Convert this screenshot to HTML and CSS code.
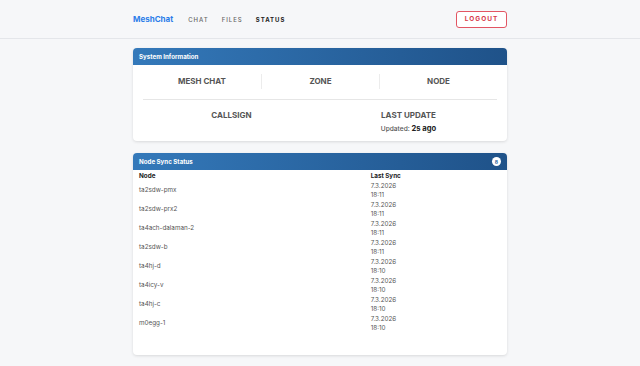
FILE: index.html
```html
<!DOCTYPE html>
<html lang="en">
<head>
  <meta charset="UTF-8">
  <title>MeshChat - Status</title>
  <link rel="stylesheet" href="styles.css">
</head>
<body>

<!-- Top navigation -->
<header class="topbar">
  <div class="topbar-inner">
    <a class="brand" href="#">MeshChat</a>
    <nav class="nav">
      <a href="#">CHAT</a>
      <a href="#">FILES</a>
      <a href="#" class="active">STATUS</a>
    </nav>
    <button class="btn-logout">LOGOUT</button>
  </div>
</header>

<main class="container">

  <!-- System info -->
  <section class="card">
    <div class="card-header">System Information</div>
    <div class="card-body info-body">
      <div class="info-row three">
        <div class="info-cell">MESH CHAT</div>
        <div class="info-cell">ZONE</div>
        <div class="info-cell">NODE</div>
      </div>
      <div class="info-row two">
        <div class="info-cell">CALLSIGN</div>
        <div class="info-cell">
          LAST UPDATE
          <div class="updated">Updated: <b>2s ago</b></div>
        </div>
      </div>
    </div>
  </section>

  <!-- Node sync -->
  <section class="card sync-card">
    <div class="card-header">
      <span>Node Sync Status</span>
      <span class="badge">8</span>
    </div>
    <div class="card-body sync-body">
      <table class="sync-table">
        <thead>
          <tr><th>Node</th><th class="col-sync">Last Sync</th></tr>
        </thead>
        <tbody id="sync-rows"></tbody>
      </table>
    </div>
  </section>

</main>

<script>
const nodes = [
  ['ta2sdw-pmx', '18:11'],
  ['ta2sdw-prx2', '18:11'],
  ['ta4ach-dalaman-2', '18:11'],
  ['ta2sdw-b', '18:11'],
  ['ta4hj-d', '18:10'],
  ['ta4icy-v', '18:10'],
  ['ta4hj-c', '18:10'],
  ['m0egg-1', '18:10']
];

let rows = '';
nodes.forEach(n => {
  rows += `<tr><td>${n[0]}</td><td>7.3.2026<br>${n[1]}</td></tr>`;
});
document.getElementById('sync-rows').innerHTML = rows;
</script>

</body>
</html>
```

FILE: styles.css
```css
body {
  font-family: Inter, 'Noto Sans', sans-serif;
  background: #f6f7f9;
  margin: 0;
  color: #333;
}
a { text-decoration: none; }

.topbar {
  height: 38px;
  border-bottom: 1px solid #e4e6ea;
  background: #f6f7f9;
}
.topbar-inner {
  width: 374px;
  margin: 0 auto;
  height: 38px;
  display: flex;
  align-items: center;
}
.brand {
  color: #2b7de9;
  font-weight: 700;
  font-size: 8px;
  margin-right: 15px;
}
.nav { display: flex; gap: 13px; flex: 1; }
.nav a {
  font-size: 6px;
  letter-spacing: 1px;
  color: #666;
  font-weight: 500;
}
.nav a.active { color: #222; font-weight: 700; }
.btn-logout {
  width: 51px;
  height: 17px;
  border: 1px solid #e25563;
  border-radius: 3px;
  background: #fff;
  color: #d83a4b;
  font-family: inherit;
  font-size: 6.5px;
  font-weight: 700;
  letter-spacing: 1px;
  padding: 0;
}

.container {
  width: 374px;
  margin: 9px auto 0;
}
.card {
  background: #fff;
  border-radius: 4px;
  box-shadow: 0 1px 3px rgba(0,0,0,0.12);
  overflow: hidden;
  margin-bottom: 12px;
}
.card-header {
  height: 17px;
  background: linear-gradient(90deg, #3479ba, #1f5289);
  color: #fff;
  font-size: 6.2px;
  font-weight: 700;
  padding: 0 6px;
  display: flex;
  align-items: center;
  justify-content: space-between;
}
.badge {
  width: 9px;
  height: 9px;
  border-radius: 50%;
  background: #fff;
  color: #2b63a0;
  font-size: 5px;
  display: flex;
  align-items: center;
  justify-content: center;
}

.info-body { padding: 0 10px; }
.info-row {
  display: grid;
  text-align: center;
  font-size: 8px;
  font-weight: 700;
  color: #555;
}
.info-row.three {
  grid-template-columns: 1fr 1fr 1fr;
  padding: 9px 0 10px;
  border-bottom: 1px solid #e6e6e6;
}
.info-row.three .info-cell {
  padding: 3px 0;
  line-height: 9px;
}
.info-row.three .info-cell + .info-cell { border-left: 1px solid #ececec; }
.info-row.two {
  grid-template-columns: 1fr 1fr;
  padding: 11px 0 7px;
  line-height: 9px;
}
.updated {
  margin-top: 4px;
  font-size: 6.6px;
  font-weight: 500;
  color: #555;
}
.updated b { color: #222; font-size: 7.6px; }

.sync-card { min-height: 202px; }
.sync-body { padding: 0 6px 20px; }
.sync-table {
  width: 100%;
  border-collapse: collapse;
  font-size: 6.3px;
}
.sync-table th {
  text-align: left;
  font-weight: 700;
  color: #222;
  height: 11px;
  padding: 0;
}
.sync-table td {
  padding: 0.5px 0;
  line-height: 9px;
  color: #555;
  vertical-align: middle;
}
.sync-table .col-sync { width: 36%; }
```
